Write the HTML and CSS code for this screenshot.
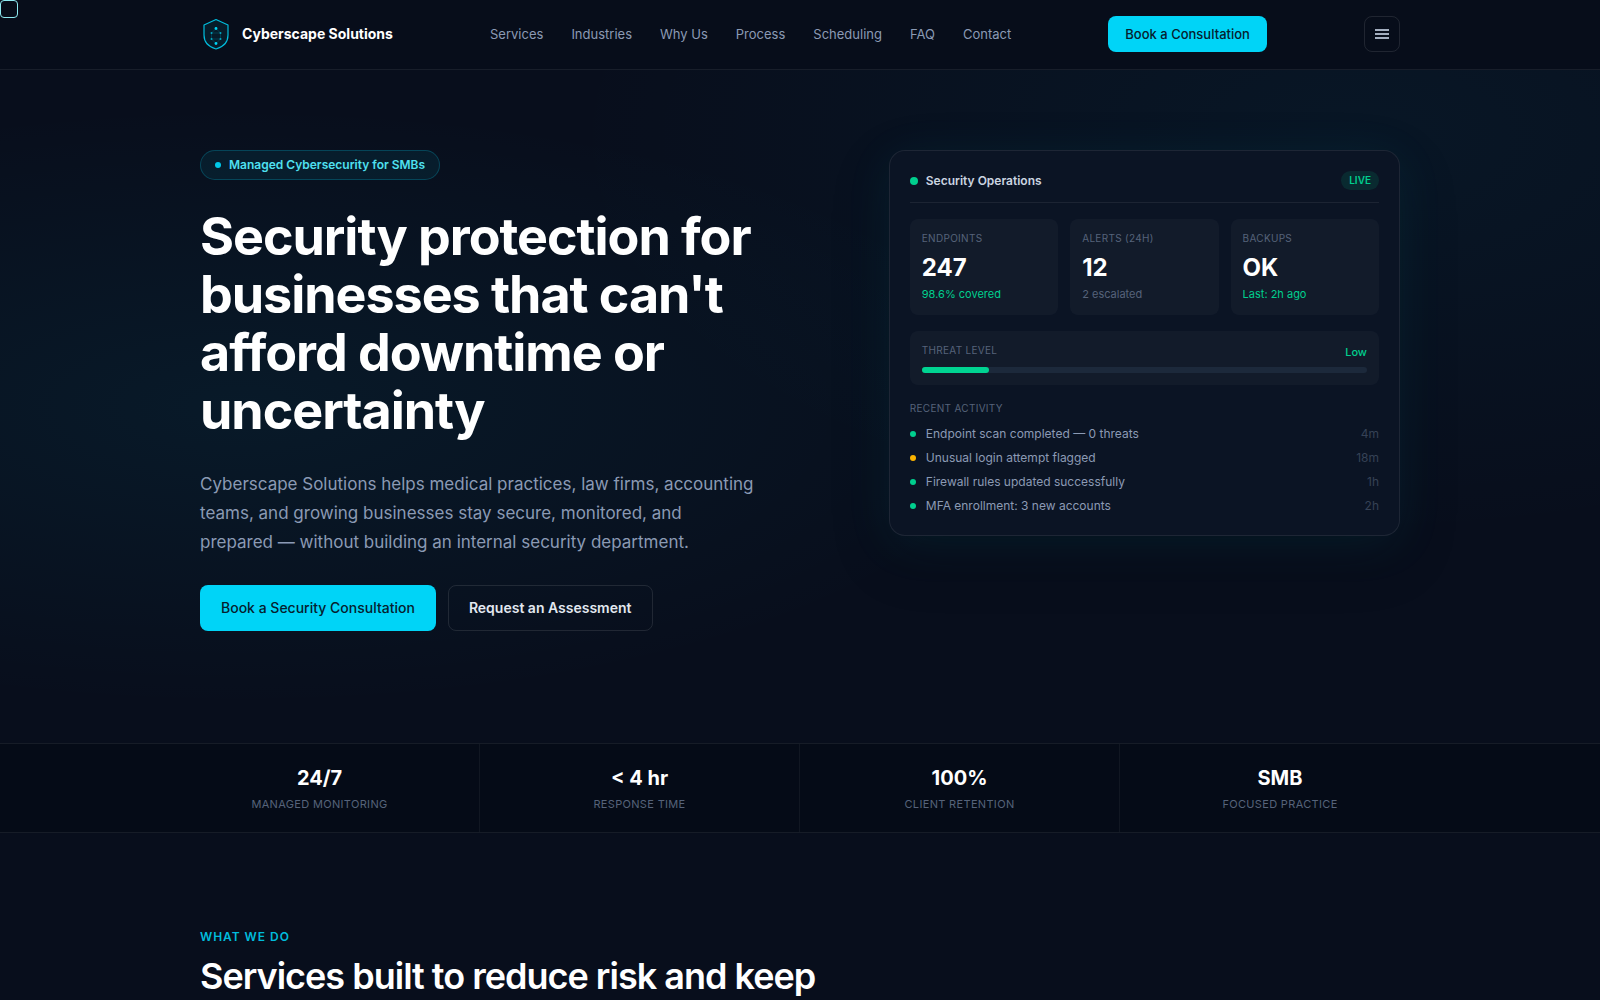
FILE: index.html
```html
<!DOCTYPE html>
<html lang="en">
<head>
<meta charset="UTF-8">
<meta name="viewport" content="width=device-width, initial-scale=1.0">
<title>Cyberscape Solutions</title>
<link rel="stylesheet" href="styles.css">
</head>
<body>
    <span class="focus-box"></span>

    <header class="site-header">
        <div class="container header-inner">
            <a class="brand" href="#">
                <svg class="brand-logo" viewBox="0 0 32 32" fill="none" aria-hidden="true">
                    <path d="M16 1.500 L28 7 V17 C28 24 23 29 16 31 C9 29 4 24 4 17 V7 Z" fill="#00d4f5" fill-opacity="0.080" stroke="#00bcdc" stroke-width="1.200" stroke-linejoin="round"/>
                    <path d="M16 10.500 L20.500 15 V21 L16 25.500 L11.500 21 V15 Z M11.500 15 H20.500 M11.500 21 H20.500" stroke="#00d4f5" stroke-opacity="0.300" stroke-width="0.600"/>
                    <circle cx="16" cy="10.500" r="1.400" fill="#00d4f5"/>
                    <circle cx="16" cy="25.500" r="1.400" fill="#00d4f5"/>
                    <g fill="#00d4f5" fill-opacity="0.700">
                        <circle cx="11.500" cy="15" r="1"/>
                        <circle cx="20.500" cy="15" r="1"/>
                        <circle cx="11.500" cy="21" r="1"/>
                        <circle cx="20.500" cy="21" r="1"/>
                    </g>
                </svg>
                <span>Cyberscape Solutions</span>
            </a>
            <nav class="main-nav">
                <a href="#services">Services</a>
                <a href="#">Industries</a>
                <a href="#">Why Us</a>
                <a href="#">Process</a>
                <a href="#">Scheduling</a>
                <a href="#">FAQ</a>
                <a href="#">Contact</a>
            </nav>
            <a class="btn btn-primary btn-small" href="#">Book a Consultation</a>
            <button class="menu-toggle" type="button" aria-label="Open menu">
                <span></span>
                <span></span>
                <span></span>
            </button>
        </div>
    </header>

    <main>
        <section class="hero">
            <div class="container hero-grid">
                <div class="hero-copy">
                    <p class="badge"><span class="dot"></span>Managed Cybersecurity for SMBs</p>
                    <h1>Security protection for businesses that can't afford downtime or uncertainty</h1>
                    <p class="lead">Cyberscape Solutions helps medical practices, law firms, accounting teams, and growing businesses stay secure, monitored, and prepared — without building an internal security department.</p>
                    <div class="hero-actions">
                        <a class="btn btn-primary" href="#">Book a Security Consultation</a>
                        <a class="btn btn-outline" href="#">Request an Assessment</a>
                    </div>
                </div>

                <div class="panel">
                    <div class="panel-head">
                        <span class="dot"></span>
                        <span class="panel-title">Security Operations</span>
                        <span class="live">LIVE</span>
                    </div>

                    <div class="tiles">
                        <div class="tile">
                            <span class="label">ENDPOINTS</span>
                            <span class="value">247</span>
                            <span class="note good">98.6% covered</span>
                        </div>
                        <div class="tile">
                            <span class="label">ALERTS (24H)</span>
                            <span class="value">12</span>
                            <span class="note">2 escalated</span>
                        </div>
                        <div class="tile">
                            <span class="label">BACKUPS</span>
                            <span class="value">OK</span>
                            <span class="note good">Last: 2h ago</span>
                        </div>
                    </div>

                    <div class="threat">
                        <div class="threat-head">
                            <span class="label">THREAT LEVEL</span>
                            <span class="note good">Low</span>
                        </div>
                        <div class="bar"><div class="bar-fill" style="width: 15%"></div></div>
                    </div>

                    <span class="label">RECENT ACTIVITY</span>
                    <ul class="activity">
                        <li><span class="dot"></span>Endpoint scan completed — 0 threats<time>4m</time></li>
                        <li><span class="dot warn"></span>Unusual login attempt flagged<time>18m</time></li>
                        <li><span class="dot"></span>Firewall rules updated successfully<time>1h</time></li>
                        <li><span class="dot"></span>MFA enrollment: 3 new accounts<time>2h</time></li>
                    </ul>
                </div>
            </div>
        </section>

        <section class="stats">
            <div class="stats-grid">
                <div class="stat"><strong>24/7</strong><span>MANAGED MONITORING</span></div>
                <div class="stat"><strong>&lt; 4 hr</strong><span>RESPONSE TIME</span></div>
                <div class="stat"><strong>100%</strong><span>CLIENT RETENTION</span></div>
                <div class="stat"><strong>SMB</strong><span>FOCUSED PRACTICE</span></div>
            </div>
        </section>

        <section class="services" id="services">
            <div class="container">
                <p class="eyebrow">WHAT WE DO</p>
                <h2>Services built to reduce risk and keep</h2>
            </div>
        </section>
    </main>
</body>
</html>
```
FILE: styles.css
```css
:root {
    --bg: #080e1c;
    --cyan: #00d4f7;
    --green: #00cf8e;
    --text: #8b9ab4;
    --muted: #56637a;
    --line: rgba(255, 255, 255, 0.07);
}
* {
    box-sizing: border-box;
}
body {
    margin: 0;
    background: var(--bg);
    color: var(--text);
    font-family: Inter, "Liberation Sans", sans-serif;
    font-size: 12px;
    line-height: 18px;
}
h1, h2, p, ul {
    margin: 0;
    padding: 0;
}
a {
    color: inherit;
    text-decoration: none;
}
.container {
    max-width: 1280px;
    margin: 0 auto;
    padding: 0 40px;
}
.focus-box {
    position: absolute;
    top: 0;
    left: 0;
    z-index: 2;
    width: 18px;
    height: 18px;
    border: 1px solid #8eeaf2;
    border-radius: 4px;
}

/* Header */
.site-header {
    background: #070d1a;
    border-bottom: 1px solid var(--line);
}
.header-inner {
    display: flex;
    align-items: center;
    justify-content: space-between;
    padding-top: 16px;
    padding-bottom: 17px;
}
.brand {
    display: flex;
    align-items: center;
    gap: 10px;
    color: #fff;
    font-size: 14px;
    font-weight: 700;
}
.brand-logo {
    width: 32px;
    height: 32px;
}
.main-nav {
    display: flex;
    gap: 28px;
    font-size: 13px;
}
.btn {
    display: flex;
    align-items: center;
    height: 46px;
    padding: 0 20px;
    border: 1px solid transparent;
    border-radius: 8px;
    font-size: 14px;
    font-weight: 500;
}
.btn-primary {
    background: var(--cyan);
    color: #06202e;
}
.btn-outline {
    border-color: rgba(255, 255, 255, 0.1);
    color: #e2e8f0;
    font-weight: 600;
}
.btn-small {
    height: 36px;
    padding: 0 16px;
    font-size: 13px;
}
.menu-toggle {
    display: flex;
    flex-direction: column;
    align-items: center;
    justify-content: center;
    gap: 2px;
    width: 36px;
    height: 36px;
    padding: 0;
    background: none;
    border: 1px solid rgba(255, 255, 255, 0.1);
    border-radius: 8px;
}
.menu-toggle span {
    width: 14px;
    height: 2px;
    background: #a3aebf;
}

/* Hero */
.hero {
    padding: 80px 0 112px;
    background:
        radial-gradient(ellipse 50% 45% at 15% 50%, rgba(0, 212, 245, 0.06), transparent),
        radial-gradient(ellipse 50% 60% at 85% 10%, rgba(0, 180, 220, 0.05), transparent);
}
.hero-grid {
    display: grid;
    grid-template-columns: 1.1fr 0.9fr;
    align-items: start;
    gap: 64px;
}
.badge {
    display: inline-flex;
    align-items: center;
    gap: 8px;
    padding: 5px 14px;
    background: rgba(0, 212, 245, 0.07);
    border: 1px solid rgba(0, 212, 245, 0.22);
    border-radius: 20px;
    color: #4fe0f0;
    font-weight: 600;
}
.badge .dot {
    background: #00c8e8;
}
.dot {
    flex: none;
    width: 6px;
    height: 6px;
    border-radius: 50%;
    background: var(--green);
}
h1 {
    margin-top: 28px;
    color: #fff;
    font-size: 52px;
    font-weight: 700;
    line-height: 58px;
    letter-spacing: -0.02em;
}
.lead {
    max-width: 556px;
    margin-top: 30px;
    font-size: 17px;
    line-height: 29px;
}
.hero-actions {
    display: flex;
    gap: 12px;
    margin-top: 28px;
}

/* Security operations panel */
.panel {
    padding: 20px;
    background: #0b1424;
    border: 1px solid rgba(255, 255, 255, 0.08);
    border-radius: 16px;
    box-shadow: 0 8px 48px rgba(0, 212, 245, 0.08), 0 20px 60px rgba(0, 0, 0, 0.2);
}
.panel-head {
    display: flex;
    align-items: center;
    gap: 8px;
    padding-bottom: 12px;
    border-bottom: 1px solid var(--line);
}
.panel-head .dot {
    width: 8px;
    height: 8px;
}
.panel-title {
    color: #cbd5e1;
    font-weight: 600;
}
.live {
    margin-left: auto;
    padding: 0 8px;
    background: rgba(0, 207, 142, 0.12);
    border-radius: 10px;
    color: var(--green);
    font-size: 10px;
    font-weight: 600;
    line-height: 19px;
}
.tiles {
    display: grid;
    grid-template-columns: repeat(3, 1fr);
    gap: 12px;
    margin-top: 16px;
}
.tile,
.threat {
    padding: 12px;
    background: rgba(255, 255, 255, 0.03);
    border-radius: 8px;
}
.tile {
    display: flex;
    flex-direction: column;
}
.label {
    display: block;
    color: var(--muted);
    font-size: 10px;
    line-height: 14px;
    letter-spacing: 0.03em;
}
.value {
    margin: 8px 0 2px;
    color: #fff;
    font-size: 24px;
    font-weight: 700;
    line-height: 30px;
}
.note {
    color: var(--muted);
    font-size: 11px;
    line-height: 18px;
}
.good {
    color: var(--green);
}
.threat {
    margin: 16px 0;
}
.threat-head {
    display: flex;
    justify-content: space-between;
    margin-bottom: 6px;
}
.threat .good {
    font-weight: 500;
}
.bar {
    height: 6px;
    border-radius: 3px;
    background: #1c293b;
}
.bar-fill {
    height: 6px;
    border-radius: 3px;
    background: #00d492;
}
.activity {
    display: grid;
    gap: 6px;
    margin-top: 10px;
    list-style: none;
}
.activity li {
    display: flex;
    align-items: center;
    gap: 10px;
}
.activity time {
    margin-left: auto;
    color: #364256;
}
.activity .warn {
    background: #fbb300;
}

/* Stats */
.stats {
    background: #050b17;
    border-top: 1px solid var(--line);
    border-bottom: 1px solid var(--line);
}
.stats-grid {
    display: grid;
    grid-template-columns: repeat(4, 1fr);
    max-width: 1280px;
    margin: 0 auto;
}
.stat {
    display: flex;
    flex-direction: column;
    gap: 4px;
    padding: 20px 0;
    border-right: 1px solid rgba(255, 255, 255, 0.05);
    text-align: center;
}
.stat:last-child {
    border-right: 0;
}
.stat strong {
    color: #fff;
    font-size: 20px;
    line-height: 28px;
}
.stat span {
    color: var(--muted);
    font-size: 11px;
    line-height: 16px;
    letter-spacing: 0.03em;
}

/* Services */
.services {
    padding: 95px 0;
}
.eyebrow {
    color: #00bcdc;
    font-weight: 600;
    letter-spacing: 0.08em;
}
h2 {
    margin-top: 8px;
    color: #fff;
    font-size: 36px;
    font-weight: 600;
    line-height: 44px;
    letter-spacing: -1px;
}
```
